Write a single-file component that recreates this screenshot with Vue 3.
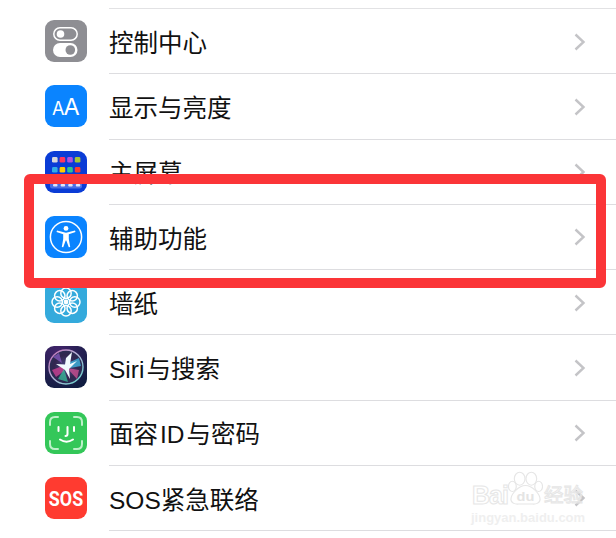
<template>
  <div class="screen">
    <ul class="settings-list">
      <li v-for="row in rows" :key="row.id" class="settings-row">
        <span class="icon">
          <svg v-if="row.id === 'control'" width="42" height="42" viewBox="0 0 42 42">
            <rect width="42" height="42" rx="9" fill="#8e8e93" />
            <rect x="8.8" y="7.8" width="23.4" height="12.4" rx="6.2" fill="none" stroke="#fff" stroke-width="1.5" />
            <circle cx="15.5" cy="14" r="3.8" fill="#fff" />
            <rect x="8" y="23" width="24.5" height="14" rx="7" fill="#fff" />
            <circle cx="25.3" cy="30" r="4.8" fill="#8e8e93" />
          </svg>

          <svg v-else-if="row.id === 'display'" width="42" height="42" viewBox="0 0 42 42">
            <rect width="42" height="42" rx="9" fill="#0a84ff" />
            <text x="7" y="29.5" class="aa aa-small">A</text>
            <text x="18.5" y="29.5" class="aa aa-big">A</text>
          </svg>

          <svg v-else-if="row.id === 'home'" width="42" height="42" viewBox="0 0 42 42">
            <rect width="42" height="42" rx="9" fill="#0a3cd6" />
            <rect v-for="dot in homeDots" :key="dot.x + '-' + dot.y" :x="dot.x" :y="dot.y" width="5.6" height="5.6" rx="1.4" :fill="dot.color" />
            <rect x="5" y="31" width="32" height="6.5" rx="2" fill="#4a6ee6" />
            <rect v-for="x in [8, 15.6, 23.2, 30.8]" :key="x" :x="x" y="33" width="4.5" height="2.5" rx="1" fill="#dfe6fb" />
          </svg>

          <svg v-else-if="row.id === 'access'" width="42" height="42" viewBox="0 0 42 42">
            <rect width="42" height="42" rx="9" fill="#0a84ff" />
            <circle cx="21" cy="21" r="15.6" fill="none" stroke="#fff" stroke-width="1.5" />
            <circle cx="21" cy="12.4" r="2.4" fill="#fff" />
            <path d="M12 14.6 L21 16.8 L30 14.6 L30.5 16 L23.8 18.2 L23.8 23 L25.2 31 L23.8 31.3 L21.3 24.5 H20.7 L18.2 31.3 L16.8 31 L18.2 23 L18.2 18.2 L11.5 16 Z" fill="#fff" />
          </svg>

          <svg v-else-if="row.id === 'wallpaper'" width="42" height="42" viewBox="0 0 42 42">
            <rect width="42" height="42" rx="9" fill="#34aadc" />
            <g fill="none" stroke="#fff" stroke-width="1.5">
              <circle v-for="p in petals" :key="p.x + '-' + p.y" :cx="p.x" :cy="p.y" r="5.2" />
            </g>
            <circle cx="21" cy="21" r="2.4" fill="#fff" />
          </svg>

          <svg v-else-if="row.id === 'siri'" width="42" height="42" viewBox="0 0 42 42">
            <defs>
              <radialGradient id="siri-bg" cx="0.3" cy="0.1" r="1">
                <stop offset="0" stop-color="#41246a" />
                <stop offset="1" stop-color="#0f1c40" />
              </radialGradient>
              <radialGradient id="siri-orb" cx="0.5" cy="0.5" r="0.5">
                <stop offset="0" stop-color="#4b4a88" />
                <stop offset="0.7" stop-color="#32264f" />
                <stop offset="1" stop-color="#2a2d54" />
              </radialGradient>
              <linearGradient id="siri-ring" x1="0" y1="0" x2="1" y2="1">
                <stop offset="0" stop-color="#c46ab4" />
                <stop offset="0.5" stop-color="#b4b8d8" />
                <stop offset="1" stop-color="#5cd4c8" />
              </linearGradient>
              <filter id="siri-blur" x="-20%" y="-20%" width="140%" height="140%">
                <feGaussianBlur stdDeviation="0.6" />
              </filter>
            </defs>
            <rect width="42" height="42" rx="9" fill="url(#siri-bg)" />
            <circle cx="21" cy="21" r="17" fill="url(#siri-orb)" stroke="url(#siri-ring)" stroke-width="1.4" />
            <g filter="url(#siri-blur)">
              <path d="M20 19 L7 24 L11 31 L19 25 Z" fill="#c2408e" opacity="0.85" />
              <path d="M22 22 L32 33 L34 24 Z" fill="#e0559a" opacity="0.7" />
              <path d="M19 23 L13 33 L23 36 Z" fill="#38c8a0" opacity="0.7" />
              <path d="M23 17 L34 12 L36 20 L25 22 Z" fill="#3fb4e0" opacity="0.8" />
              <path d="M17 17 L8 11 L14 7 Z" fill="#8a5cc8" opacity="0.7" />
              <path d="M21 12 L27 6 L25 18 L32 15 L24 23 L25 33 L20 24 L11 18 L20 18.5 Z" fill="#f2fbff" />
            </g>
          </svg>

          <svg v-else-if="row.id === 'faceid'" width="42" height="42" viewBox="0 0 42 42">
            <rect width="42" height="42" rx="9" fill="#34c759" />
            <g fill="none" stroke="#bdf0c9" stroke-width="2" stroke-linecap="round">
              <path d="M5 13 V10 Q5 5 10 5 H13" />
              <path d="M29 5 H32 Q37 5 37 10 V13" />
              <path d="M5 29 V32 Q5 37 10 37 H13" />
              <path d="M29 37 H32 Q37 37 37 32 V29" />
            </g>
            <g fill="none" stroke="#fff" stroke-width="2" stroke-linecap="round">
              <path d="M13.5 15 V19" />
              <path d="M29 15 V19" />
              <path d="M22.5 15 V22 Q22.5 24 20.5 24" />
              <path d="M15 27.5 Q21.5 32 28 27.5" />
            </g>
          </svg>

          <svg v-else width="42" height="42" viewBox="0 0 42 42">
            <rect width="42" height="42" rx="9" fill="#ff3b30" />
            <text class="sos" text-anchor="middle" transform="translate(21 28.5) scale(0.85 1)">SOS</text>
          </svg>
        </span>
        <div class="row-body">
          <span class="label">{{ row.label }}</span>
          <svg class="chevron" width="12" height="18" viewBox="0 0 12 18">
            <path d="M1.5 1.5 L9.5 9 L1.5 16.5" fill="none" stroke="#c4c4c7" stroke-width="2.4" />
          </svg>
        </div>
      </li>
    </ul>

    <div class="highlight"></div>

    <div class="watermark">
      <div class="wm-top">
        <span class="wm-bai">Bai</span>
        <svg width="35" height="36" viewBox="0 0 36 42" preserveAspectRatio="none">
          <g fill="none" stroke="#e6e6e6" stroke-width="1.2">
            <ellipse cx="12" cy="9" rx="5.5" ry="7.5" />
            <ellipse cx="24" cy="9" rx="5.5" ry="7.5" />
            <ellipse cx="4.5" cy="18" rx="4" ry="6" />
            <ellipse cx="31.5" cy="18" rx="4" ry="6" />
            <path d="M18 17 C11 17 3 27 3 33 C3 38 8 39 11 38.5 L25 38.5 C28 39 33 38 33 33 C33 27 25 17 18 17 Z" />
          </g>
          <text x="18" y="35" class="wm-du" text-anchor="middle">du</text>
        </svg>
        <span class="wm-jy">经验</span>
      </div>
      <div class="wm-url">jingyan.baidu.com</div>
    </div>
  </div>
</template>

<script setup>
const rows = [
  { id: 'control', label: '控制中心' },
  { id: 'display', label: '显示与亮度' },
  { id: 'home', label: '主屏幕' },
  { id: 'access', label: '辅助功能' },
  { id: 'wallpaper', label: '墙纸' },
  { id: 'siri', label: 'Siri\u200a与搜索' },
  { id: 'faceid', label: '面容\u200aID\u200a与密码' },
  { id: 'sos', label: 'SOS紧急联络' },
]

// home screen icon: two rows of little app tiles
const homeColors = ['#d8d8dc', '#ff375f', '#af52de', '#a4c639', '#32ade6', '#ffcc00', '#30c48d', '#ff3b30']
const homeDots = homeColors.map((color, i) => ({
  x: 7 + (i % 4) * 7.6,
  y: 6 + Math.floor(i / 4) * 10,
  color,
}))

// wallpaper flower: eight circles round the centre
const petals = Array.from({ length: 8 }, (_, i) => {
  const a = (i * Math.PI) / 4
  return {
    x: +(21 + 8.8 * Math.cos(a)).toFixed(2),
    y: +(21 + 8.8 * Math.sin(a)).toFixed(2),
  }
})
</script>

<style>
html,
body {
  background: #fff;
  overflow: hidden;
}
</style>

<style scoped>
.screen {
  position: relative;
  width: 616px;
  height: 538px;
  overflow: hidden;
  padding-top: 8px;
  box-sizing: border-box;
  background: #fff;
  font-family: "Liberation Sans", "Noto Sans CJK SC", sans-serif;
  color: #111;
}

.settings-list {
  list-style: none;
  margin: 0;
  padding: 0;
}

.settings-list::before {
  content: "";
  display: block;
  height: 1px;
  margin-left: 109px;
  background: #e2e2e4;
}

.settings-row {
  display: flex;
  align-items: center;
  height: 65.25px;
  padding-left: 45px;
}

.icon {
  flex: none;
  width: 42px;
  height: 42px;
  margin-right: 22px;
  margin-bottom: 1px;
}

.icon svg {
  display: block;
}

.row-body {
  flex: 1;
  align-self: stretch;
  display: flex;
  align-items: center;
  justify-content: space-between;
  padding-right: 30px;
  border-bottom: 1px solid #dddde0;
}

.label {
  font-size: 24.5px;
  line-height: 1;
  padding-top: 6px;
}

.chevron {
  flex: none;
  margin-top: 1px;
}

.aa {
  font-family: "Inter", "Liberation Sans", sans-serif;
  font-weight: 400;
  fill: #fff;
}

.aa-small {
  font-size: 18px;
}

.aa-big {
  font-size: 23.5px;
}

.sos {
  font-family: "Roboto", "Liberation Sans", sans-serif;
  font-weight: 700;
  font-size: 21px;
  fill: #fff;
}

.highlight {
  position: absolute;
  left: 24px;
  top: 174px;
  width: 582px;
  height: 114px;
  box-sizing: border-box;
  border: 10px solid #fb3538;
  border-radius: 6px;
}

.watermark {
  position: absolute;
  left: 472px;
  top: 471px;
  width: 144px;
}

.wm-top {
  display: flex;
  align-items: flex-end;
  height: 36px;
}

.wm-bai {
  font-size: 25px;
  line-height: 24px;
  letter-spacing: -1px;
  font-weight: 700;
  color: transparent;
  -webkit-text-stroke: 1px #e6e6e6;
}

.wm-du {
  font-family: "Liberation Sans", sans-serif;
  font-weight: 700;
  font-size: 15px;
  fill: #e4e4e4;
}

.wm-jy {
  font-size: 19.5px;
  line-height: 24px;
  margin-left: 1px;
  color: transparent;
  -webkit-text-stroke: 1px #e6e6e6;
}

.wm-url {
  font-size: 13px;
  line-height: 16px;
  margin-top: 3px;
  margin-left: -1px;
  color: #efefef;
  font-weight: 700;
}
</style>
